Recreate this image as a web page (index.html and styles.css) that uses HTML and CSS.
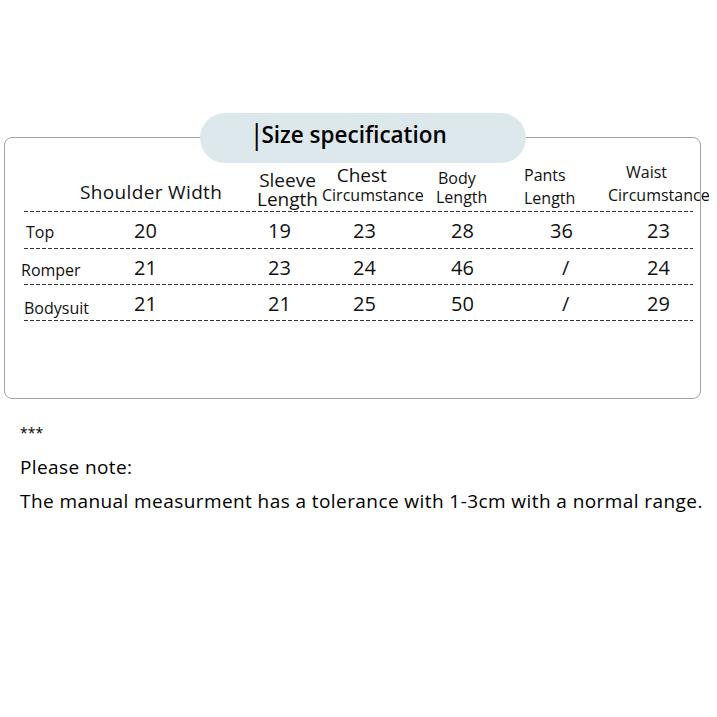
FILE: index.html
```html
<!DOCTYPE html>
<html>
<head>
<meta charset="utf-8">
<link rel="stylesheet" href="styles.css">
</head>
<body>
<div class="page">
  <div class="card">
    <div class="pill"><span class="bar">|</span>Size specification</div>
    <div class="table">
      <div class="head">
        <div class="h h-shoulder">Shoulder Width</div>
        <div class="h h-sleeve">Sleeve<br>Length</div>
        <div class="h h-chest"><span class="big">Chest</span><br>Circumstance</div>
        <div class="h h-body"><span class="body1">Body</span><br>Length</div>
        <div class="h h-pants">Pants<br>Length</div>
        <div class="h h-waist"><span class="waist1">Waist</span><br>Circumstance</div>
      </div>
      <div class="row r1">
        <div class="lbl">Top</div><div>20</div><div>19</div><div>23</div><div>28</div><div>36</div><div>23</div>
      </div>
      <div class="row r2">
        <div class="lbl">Romper</div><div>21</div><div>23</div><div>24</div><div>46</div><div class="sl">/</div><div>24</div>
      </div>
      <div class="row r3">
        <div class="lbl">Bodysuit</div><div>21</div><div>21</div><div>25</div><div>50</div><div class="sl">/</div><div>29</div>
      </div>
    </div>
  </div>
  <div class="notes">
    <p class="stars">***</p>
    <p class="n1">Please note:</p>
    <p class="n2">The manual measurment has a tolerance with 1-3cm with a normal range.</p>
  </div>
</div>
</body>
</html>
```
FILE: styles.css
```css
html, body { margin: 0; padding: 0; background: #fff; }
body { font-family: "Open Sans", "Noto Sans", sans-serif; color: #111; }
.page { padding: 137px 0 0 4px; }
.card {
  position: relative;
  width: 697px; height: 262px; box-sizing: border-box;
  border: 1px solid #a4a4a4; border-radius: 8px;
  padding-left: 19px;
}
.pill {
  position: absolute; left: 195px; top: -25px;
  width: 326px; height: 50px; box-sizing: border-box;
  border-radius: 25px; background: #dde8ec;
  padding-left: 49px;
  font-size: 22.5px; font-weight: 600; line-height: 41px; letter-spacing: 0;
  color: #000;
}
.bar { font-weight: 400; font-size: 28px; margin-right: -3px; vertical-align: -1px; }
.table { width: 669px; }
.head {
  height: 74px; position: relative;
  display: grid;
  grid-template-columns: 56px 173px 69px 114px 88px 84px 1fr;
  align-items: start;
  font-size: 16px; line-height: 19px;
}
.h { text-align: center; }
.h-shoulder { grid-column: 2; justify-self: start; font-size: 19px; margin-top: 45px; letter-spacing: 0.35px; }
.h-sleeve { grid-column: 3; justify-self: center; font-size: 19px; font-weight: 500; margin-top: 33px; }
.h-chest { grid-column: 4; justify-self: start; margin-top: 28px; }
.h-chest .big { font-size: 19px; font-weight: 500; display: inline-block; padding-right: 22px; }
.h-body { grid-column: 5; justify-self: start; margin-top: 31px; text-align: left; }
.body1 { padding-left: 2px; }
.h-pants { grid-column: 6; justify-self: start; text-align: left; line-height: 23px; margin-top: 26px; }
.h-waist { grid-column: 7; justify-self: start; margin-top: 23px; text-align: left; line-height: 23px; }
.waist1 { padding-left: 18px; }
.head, .row { background: repeating-linear-gradient(to right, #333 0 4px, transparent 4px 6px) left bottom / 100% 1px no-repeat; }
.row {
  display: grid;
  grid-template-columns: 110px 134px 85px 98px 99px 97px 1fr;
  height: 36px; align-items: center;
  font-size: 20px;
}
.r1 { height: 37px; }
.lbl { font-size: 16px; padding-top: 3px; }
.r1 .lbl { padding-left: 2px; padding-top: 2px; }
.r2 .lbl { margin-left: -3px; padding-top: 6px; }
.r3 .lbl { padding-top: 9px; }
.sl { padding-left: 12px; }
.notes { padding-left: 16px; color: #000; }
.notes p { margin: 0; }
.stars { font-size: 14px; padding-top: 24px; line-height: 20px; }
.n1 { font-size: 19px; line-height: 34px; padding-top: 7px; letter-spacing: 0.4px; }
.n2 { font-size: 19px; line-height: 34px; letter-spacing: 0.42px; }
```
